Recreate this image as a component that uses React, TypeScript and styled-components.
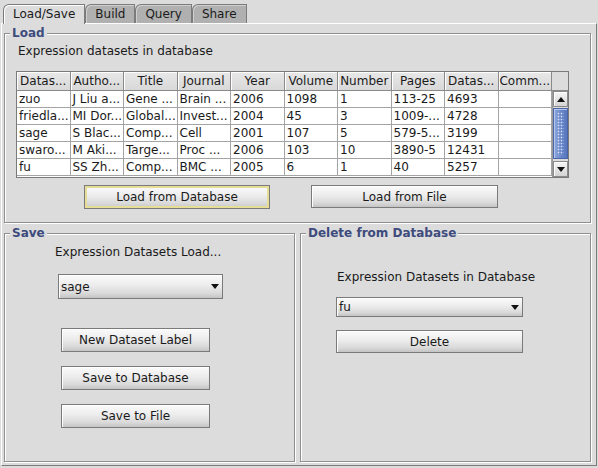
import styled, { createGlobalStyle } from 'styled-components';

const GlobalStyle = createGlobalStyle`
  html, body { margin: 0; padding: 0; background: #dcdcdc; }
  body {
    font-family: 'DejaVu Sans', Verdana, sans-serif;
    font-size: 12px;
    color: #1a1a1a;
  }
  * { box-sizing: border-box; }
`;

const headers = ['Datas...', 'Autho...', 'Title', 'Journal', 'Year', 'Volume', 'Number', 'Pages', 'Datas...', 'Comm...'];

const rows = [
  ['zuo', 'J Liu a...', 'Gene ...', 'Brain ...', '2006', '1098', '1', '113-25', '4693', ''],
  ['friedla...', 'MI Dor...', 'Global...', 'Invest...', '2004', '45', '3', '1009-...', '4728', ''],
  ['sage', 'S Blac...', 'Comp...', 'Cell', '2001', '107', '5', '579-5...', '3199', ''],
  ['swaro...', 'M Aki...', 'Targe...', 'Proc ...', '2006', '103', '10', '3890-5', '12431', ''],
  ['fu', 'SS Zh...', 'Comp...', 'BMC ...', '2005', '6', '1', '40', '5257', ''],
];

const tabs = ['Load/Save', 'Build', 'Query', 'Share'];

function Arrow({ up }: { up?: boolean }) {
  return (
    <svg width="8" height="5" viewBox="0 0 8 5">
      <polygon points={up ? '0,5 8,5 4,0' : '0,0 8,0 4,5'} fill="#111" />
    </svg>
  );
}

export default function App() {
  return (
    <Window>
      <GlobalStyle />
      <TabBar>
        {tabs.map((t, i) => (
          <Tab key={t} $active={i === 0}>{t}</Tab>
        ))}
      </TabBar>
      <Pane>
        <Group>
          <Legend>Load</Legend>
          <LoadBody>
            <Label $indent={2}>Expression datasets in database</Label>
            <ScrollPane>
              <HeaderRow>
                {headers.map((h, i) => (
                  <HeaderCell key={i}>{h}</HeaderCell>
                ))}
              </HeaderRow>
              <Corner />
              <Body>
                {rows.map((r, ri) => (
                  <Row key={ri}>
                    {r.map((c, ci) => (
                      <Cell key={ci}>{c}</Cell>
                    ))}
                  </Row>
                ))}
              </Body>
              <ScrollBar>
                <ArrowButton><Arrow up /></ArrowButton>
                <Track>
                  <Thumb><Grip /></Thumb>
                </Track>
                <ArrowButton><Arrow /></ArrowButton>
              </ScrollBar>
            </ScrollPane>
            <ButtonRow>
              <Button $w={186} $h={24} $focus>Load from Database</Button>
              <Button $w={187} $h={23}>Load from File</Button>
            </ButtonRow>
          </LoadBody>
        </Group>

        <Bottom>
          <Group>
            <Legend>Save</Legend>
            <SaveBody>
              <Label>Expression Datasets Load...</Label>
              <Combo $w={165} $h={25} $indent={3} $top={15}>
                <span>sage</span>
                <Arrow />
              </Combo>
              <ButtonStack>
                <Button $w={149} $h={24}>New Dataset Label</Button>
                <Button $w={149} $h={24}>Save to Database</Button>
                <Button $w={149} $h={24}>Save to File</Button>
              </ButtonStack>
            </SaveBody>
          </Group>
          <Group>
            <Legend>Delete from Database</Legend>
            <DeleteBody>
              <Label $indent={1}>Expression Datasets in Database</Label>
              <Combo $w={187} $h={20} $top={13}>
                <span>fu</span>
                <Arrow />
              </Combo>
              <Button $w={187} $h={23} style={{ marginTop: 13 }}>Delete</Button>
            </DeleteBody>
          </Group>
        </Bottom>
      </Pane>
    </Window>
  );
}

const Window = styled.div`
  width: 598px;
  height: 468px;
  display: flex;
  flex-direction: column;
  background: #dcdcdc;
  overflow: hidden;
`;

const TabBar = styled.div`
  display: flex;
  align-items: flex-start;
  height: 23px;
  padding: 4px 0 0 3px;
`;

const Tab = styled.div<{ $active?: boolean }>`
  position: relative;
  z-index: ${p => (p.$active ? 1 : 0)};
  height: ${p => (p.$active ? 20 : 19)}px;
  padding: 0 9px 1px;
  display: flex;
  align-items: center;
  background: ${p => (p.$active ? '#dcdcdc' : '#b0b0b0')};
  border: 1px solid #7b7b7b;
  border-bottom: none;
  border-top-left-radius: 6px;
  box-shadow: inset 1px 1px 0 ${p => (p.$active ? '#fff' : '#cfcfcf')};
  line-height: 14px;
  white-space: nowrap;
`;

const Pane = styled.div`
  flex: 1;
  display: flex;
  flex-direction: column;
  gap: 10px;
  margin: 0 1px 2px 1px;
  padding: 9px 5px 3px 2px;
  border-top: 1px solid #fff;
  border-left: 1px solid #fff;
  border-right: 1px solid #7b7b7b;
  border-bottom: 1px solid #7b7b7b;
`;

const Group = styled.section`
  position: relative;
  border: 1px solid #8f8f8f;
  box-shadow: inset 1px 1px 0 #fff, 1px 1px 0 #fff;
  display: flex;
  flex-direction: column;
`;

const Legend = styled.span`
  position: absolute;
  top: -8px;
  left: 5px;
  padding: 0 2px;
  background: #dcdcdc;
  font-weight: bold;
  color: #3d4b7d;
  line-height: 14px;
  white-space: nowrap;
`;

const Label = styled.div<{ $indent?: number }>`
  line-height: 14px;
  margin-left: ${p => p.$indent ?? 0}px;
  white-space: nowrap;
`;

const LoadBody = styled.div`
  display: flex;
  flex-direction: column;
  padding: 10px 21px 13px 11px;
`;

const ScrollPane = styled.div`
  margin-top: 13px;
  height: 107px;
  display: grid;
  grid-template-columns: 1fr 16px;
  grid-template-rows: 19px 1fr;
  border: 1px solid #7a7a7a;
  background: #dcdcdc;
`;

const HeaderRow = styled.div`
  display: grid;
  grid-template-columns: repeat(10, 1fr);
`;

const HeaderCell = styled.div`
  border-right: 1px solid #8a8a8a;
  border-bottom: 1px solid #8a8a8a;
  box-shadow: inset 1px 1px 0 #fff;
  background: linear-gradient(#e8e8e8, #d8d8d8);
  text-align: center;
  line-height: 18px;
  white-space: nowrap;
  overflow: hidden;
`;

const Corner = styled.div`
  border-bottom: 1px solid #8a8a8a;
  background: #dcdcdc;
`;

const Body = styled.div`
  background: #fff;
  overflow: hidden;
`;

const Row = styled.div`
  display: grid;
  grid-template-columns: repeat(10, 1fr);
  height: 17px;
`;

const Cell = styled.div`
  border-right: 1px solid #a4a4a4;
  border-bottom: 1px solid #a4a4a4;
  padding-left: 2px;
  line-height: 16px;
  white-space: nowrap;
  overflow: hidden;
`;

const ScrollBar = styled.div`
  display: flex;
  flex-direction: column;
  background: #dcdcdc;
  border-left: 1px solid #9a9a9a;
`;

const ArrowButton = styled.div`
  height: 16px;
  display: flex;
  align-items: center;
  justify-content: center;
  border: 1px solid #8a8a8a;
  box-shadow: inset 1px 1px 0 #fff;
  background: linear-gradient(#f6f6f6, #d4d4d4);
`;

const Track = styled.div`
  flex: 1;
  display: flex;
  padding: 1px 0 2px;
`;

const Thumb = styled.div`
  flex: 1;
  display: flex;
  padding: 3px 3px;
  border: 1px solid #4a66a8;
  box-shadow: inset 1px 1px 0 #b7c7ec;
  background: linear-gradient(90deg, #8ea7dc, #6685c9 60%, #5776bd);
`;

const Grip = styled.span`
  flex: 1;
  background: radial-gradient(circle, #d6e0f7 0.7px, transparent 1.1px) 0 0 / 3px 3px;
`;

const ButtonRow = styled.div`
  display: flex;
  align-items: flex-start;
  gap: 41px;
  margin-top: 7px;
  padding-left: 68px;
`;

const Button = styled.button<{ $w: number; $h: number; $focus?: boolean }>`
  width: ${p => p.$w}px;
  height: ${p => p.$h}px;
  padding: 0;
  font: inherit;
  color: #1a1a1a;
  border: 1px solid #7a7a7a;
  background: linear-gradient(#fbfbfb, #ececec 45%, #d9d9d9 80%, #c4c4c4);
  box-shadow: ${p => (p.$focus ? 'inset 0 0 0 2px #e6dd96' : 'inset 1px 1px 0 #fff')};
`;

const Combo = styled.div<{ $w: number; $h: number; $indent?: number; $top: number }>`
  width: ${p => p.$w}px;
  height: ${p => p.$h}px;
  margin: ${p => p.$top}px 0 0 ${p => p.$indent ?? 0}px;
  display: flex;
  align-items: center;
  justify-content: space-between;
  padding: 0 3px 0 2px;
  border: 1px solid #7a7a7a;
  box-shadow: inset 1px 1px 0 #fff;
  background: linear-gradient(#fbfbfb, #ececec 45%, #d9d9d9 80%, #c4c4c4);
`;

const Bottom = styled.div`
  flex: 1;
  display: grid;
  grid-template-columns: 1fr 1fr;
  gap: 5px;
`;

const SaveBody = styled.div`
  display: flex;
  flex-direction: column;
  align-items: flex-start;
  padding: 11px 0 0 50px;
`;

const ButtonStack = styled.div`
  display: flex;
  flex-direction: column;
  gap: 14px;
  margin: 29px 0 0 6px;
`;

const DeleteBody = styled.div`
  display: flex;
  flex-direction: column;
  align-items: flex-start;
  padding: 36px 0 0 35px;
`;
